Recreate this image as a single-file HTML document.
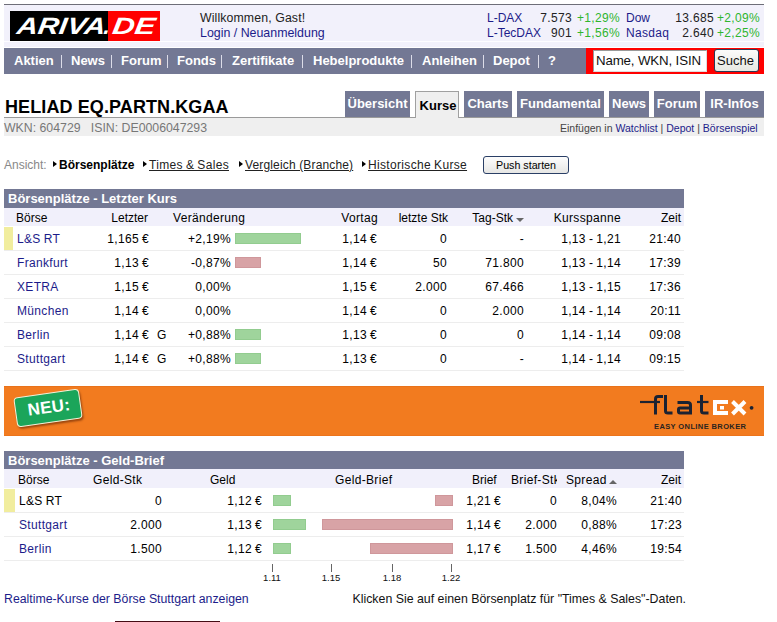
<!DOCTYPE html>
<html><head><meta charset="utf-8">
<style>
*{margin:0;padding:0;box-sizing:border-box}
html,body{width:777px;height:622px;overflow:hidden;background:#fff}
body{position:relative;font-family:"Liberation Sans",sans-serif;font-size:12px;color:#000}
.a{position:absolute;white-space:nowrap;line-height:15px}
.r{text-align:right}
.t{letter-spacing:0.33px;word-spacing:-0.6px}
.lnk{color:#1c1c8a}
.nav{color:#fff;font-weight:bold;font-size:13px}
.sp{position:absolute;top:55px;width:1px;height:13px;background:#dcdce8}
.tab{position:absolute;top:91px;height:26px;background:#737894;color:#fff;font-weight:bold;font-size:13px;line-height:26px;text-align:center}
.bar{position:absolute;height:11px}
.g{background:#9fd49c;box-shadow:inset 0 0 0 1px #92cc8f}
.rd{background:#d8a3a6;box-shadow:inset 0 0 0 1px #cf979b}
.sepl{position:absolute;left:4px;width:680px;height:1px;background:#ededed}
.tri{position:absolute;width:0;height:0;border-top:3px solid transparent;border-bottom:3px solid transparent;border-left:4px solid #000}
</style></head><body>
<div style="position:absolute;left:4px;top:4px;width:760px;height:1px;background:#6e6e78"></div>
<div style="position:absolute;left:4px;top:5px;width:760px;height:42px;background:#f2f1fb"></div>
<div style="position:absolute;left:4px;top:41px;width:760px;height:1px;background:#fdfdff"></div>
<div style="position:absolute;left:10px;top:11px;width:98px;height:30px;background:#000"></div>
<div style="position:absolute;left:108px;top:11px;width:52px;height:30px;background:#f00"></div>
<svg style="position:absolute;left:0;top:0" width="170" height="50">
<g transform="translate(4.78,0) skewX(-8)">
<text x="16" y="34.3" textLength="88.5" lengthAdjust="spacingAndGlyphs" font-family="Liberation Sans" font-weight="bold" font-style="italic" font-size="23.6" fill="#fff">ARIVA</text>
<text x="103" y="34.3" font-family="Liberation Sans" font-weight="bold" font-style="italic" font-size="23" fill="#fff">.</text>
<text x="111.5" y="34.3" textLength="43" lengthAdjust="spacingAndGlyphs" font-family="Liberation Sans" font-weight="bold" font-style="italic" font-size="23.6" fill="#fff">DE</text>
</g></svg>
<div class="a" style="left:200px;top:11px;font-size:12.3px;letter-spacing:0.12px;color:#222">Willkommen, Gast!</div>
<div class="a lnk" style="left:200px;top:26px;font-size:12.4px">Login / Neuanmeldung</div>
<div class="a lnk" style="left:487px;top:11px">L-DAX</div>
<div class="a lnk" style="left:487px;top:26px">L-TecDAX</div>
<div class="a r t" style="left:520px;width:52px;top:11px;color:#222">7.573</div>
<div class="a r t" style="left:520px;width:52px;top:26px;color:#222">901</div>
<div class="a t" style="left:577px;top:11px;color:#2fb52f">+1,29%</div>
<div class="a t" style="left:577px;top:26px;color:#2fb52f">+1,56%</div>
<div class="a lnk" style="left:626px;top:11px">Dow</div>
<div class="a lnk t" style="left:626px;top:26px">Nasdaq</div>
<div class="a r t" style="left:660px;width:54px;top:11px;color:#222">13.685</div>
<div class="a r t" style="left:660px;width:54px;top:26px;color:#222">2.640</div>
<div class="a t" style="left:717px;top:11px;color:#2fb52f">+2,09%</div>
<div class="a t" style="left:717px;top:26px;color:#2fb52f">+2,25%</div>
<div style="position:absolute;left:4px;top:48px;width:582px;height:26px;background:#737894"></div>
<div class="a nav" style="left:14px;top:53px">Aktien</div>
<div class="a nav" style="left:71px;top:53px">News</div>
<div class="a nav" style="left:121px;top:53px">Forum</div>
<div class="a nav" style="left:177px;top:53px">Fonds</div>
<div class="a nav" style="left:232px;top:53px">Zertifikate</div>
<div class="a nav" style="left:313px;top:53px">Hebelprodukte</div>
<div class="a nav" style="left:422px;top:53px">Anleihen</div>
<div class="a nav" style="left:493px;top:53px">Depot</div>
<div class="a nav" style="left:548px;top:53px">?</div>
<div class="sp" style="left:61px"></div>
<div class="sp" style="left:111px"></div>
<div class="sp" style="left:167px"></div>
<div class="sp" style="left:221px"></div>
<div class="sp" style="left:302px"></div>
<div class="sp" style="left:411px"></div>
<div class="sp" style="left:483px"></div>
<div class="sp" style="left:538px"></div>
<div style="position:absolute;left:586px;top:48px;width:178px;height:26px;background:#f00"></div>
<div style="position:absolute;left:593px;top:50px;width:114px;height:22px;background:#fff;border:1px solid #9a9a9a;border-right-color:#ddd;border-bottom-color:#ddd"></div>
<div class="a" style="left:596px;top:53px;font-size:13.3px;letter-spacing:-0.15px;color:#111">Name, WKN, ISIN</div>
<div style="position:absolute;left:714px;top:49px;width:45px;height:23px;background:linear-gradient(#fbfbfa,#e8e8e2);border:1px solid #2b3a55;border-radius:3px"></div>
<div class="a" style="left:717px;top:53px;font-size:13px;color:#111">Suche</div>
<div class="a" style="left:5px;top:97px;font-size:18px;line-height:20px;font-weight:bold;letter-spacing:0.1px">HELIAD EQ.PARTN.KGAA</div>
<div class="tab" style="left:345px;width:65px">Übersicht</div>
<div class="tab" style="left:415px;width:44px;top:91px;height:27px;line-height:28px;background:#efefef;color:#000;border:1px solid #a0a0a0;border-bottom:none;padding-left:2px">Kurse</div>
<div class="tab" style="left:464px;width:48px">Charts</div>
<div class="tab" style="left:517px;width:87px">Fundamental</div>
<div class="tab" style="left:609px;width:40px">News</div>
<div class="tab" style="left:654px;width:46px">Forum</div>
<div class="tab" style="left:705px;width:59px">IR-Infos</div>
<div style="position:absolute;left:4px;top:117px;width:411px;height:1px;background:#9a9a9a"></div>
<div style="position:absolute;left:459px;top:117px;width:305px;height:1px;background:#9a9a9a"></div>
<div style="position:absolute;left:4px;top:118px;width:760px;height:18px;background:#efefef"></div>
<div class="a" style="left:4px;top:121px;color:#777;font-size:12.3px">WKN: 604729&nbsp;&nbsp; ISIN: DE0006047293</div>
<div class="a" style="left:560px;top:121px;font-size:10.5px;color:#444">Einfügen in <span class="lnk">Watchlist</span> | <span class="lnk">Depot</span> | <span class="lnk">Börsenspiel</span></div>
<div class="a" style="left:4px;top:158px;color:#888">Ansicht:</div>
<div class="tri" style="left:53px;top:161px"></div>
<div class="tri" style="left:143px;top:161px"></div>
<div class="tri" style="left:239px;top:161px"></div>
<div class="tri" style="left:362px;top:161px"></div>
<div class="a" style="left:59px;top:158px;font-weight:bold">Börsenplätze</div>
<div class="a t" style="left:149px;top:158px;text-decoration:underline;color:#222">Times &amp; Sales</div>
<div class="a" style="left:245px;top:158px;text-decoration:underline;color:#222;letter-spacing:0.15px">Vergleich (Branche)</div>
<div class="a t" style="left:368px;top:158px;text-decoration:underline;color:#222">Historische Kurse</div>
<div style="position:absolute;left:483px;top:156px;width:86px;height:18px;background:linear-gradient(#fdfdfd,#e6e6e4);border:1px solid #2a3f66;border-radius:3px"></div>
<div class="a" style="left:496px;top:158px;font-size:10.7px">Push starten</div>
<div style="position:absolute;left:4px;top:189px;width:680px;height:19px;background:#737894"></div>
<div class="a" style="left:8px;top:191px;font-size:13px;font-weight:bold;color:#fff">Börsenplätze - Letzter Kurs</div>
<div style="position:absolute;left:4px;top:208px;width:680px;height:18px;background:#f1f0fb"></div>
<div class="a" style="left:16px;top:211px">Börse</div>
<div class="a r" style="left:80px;width:68px;top:211px">Letzter</div>
<div class="a t" style="left:173px;top:211px">Veränderung</div>
<div class="a r t" style="left:302px;width:76px;top:211px">Vortag</div>
<div class="a r" style="left:382px;width:66px;top:211px">letzte Stk</div>
<div class="a r" style="left:450px;width:63px;top:211px">Tag-Stk</div>
<div style="position:absolute;left:516px;top:218px;width:0;height:0;border-left:4px solid transparent;border-right:4px solid transparent;border-top:4px solid #666"></div>
<div class="a r t" style="left:531px;width:90px;top:211px">Kursspanne</div>
<div class="a r" style="left:631px;width:50px;top:211px">Zeit</div>
<div style="position:absolute;left:4px;top:227px;width:9px;height:23px;background:#f1ed9e"></div>
<div class="a lnk t" style="left:17px;top:232px">L&amp;S RT</div>
<div class="a r t" style="left:91px;width:58px;top:232px">1,165 €</div>
<div class="a r t" style="left:181px;width:50px;top:232px">+2,19%</div>
<div class="bar g" style="left:235px;top:233px;width:66px"></div>
<div class="a r t" style="left:317px;width:60px;top:232px">1,14 €</div>
<div class="a r t" style="left:387px;width:60px;top:232px">0</div>
<div class="a r t" style="left:464px;width:60px;top:232px">-</div>
<div class="a r t" style="left:541px;width:80px;top:232px">1,13 - 1,21</div>
<div class="a r t" style="left:621px;width:60px;top:232px">21:40</div>
<div class="sepl" style="top:250px"></div>
<div class="a lnk t" style="left:17px;top:256px">Frankfurt</div>
<div class="a r t" style="left:91px;width:58px;top:256px">1,13 €</div>
<div class="a r t" style="left:181px;width:50px;top:256px">-0,87%</div>
<div class="bar rd" style="left:235px;top:257px;width:26px"></div>
<div class="a r t" style="left:317px;width:60px;top:256px">1,14 €</div>
<div class="a r t" style="left:387px;width:60px;top:256px">50</div>
<div class="a r t" style="left:464px;width:60px;top:256px">71.800</div>
<div class="a r t" style="left:541px;width:80px;top:256px">1,13 - 1,14</div>
<div class="a r t" style="left:621px;width:60px;top:256px">17:39</div>
<div class="sepl" style="top:274px"></div>
<div class="a lnk t" style="left:17px;top:280px">XETRA</div>
<div class="a r t" style="left:91px;width:58px;top:280px">1,15 €</div>
<div class="a r t" style="left:181px;width:50px;top:280px">0,00%</div>
<div class="a r t" style="left:317px;width:60px;top:280px">1,15 €</div>
<div class="a r t" style="left:387px;width:60px;top:280px">2.000</div>
<div class="a r t" style="left:464px;width:60px;top:280px">67.466</div>
<div class="a r t" style="left:541px;width:80px;top:280px">1,13 - 1,15</div>
<div class="a r t" style="left:621px;width:60px;top:280px">17:36</div>
<div class="sepl" style="top:298px"></div>
<div class="a lnk t" style="left:17px;top:304px">München</div>
<div class="a r t" style="left:91px;width:58px;top:304px">1,14 €</div>
<div class="a r t" style="left:181px;width:50px;top:304px">0,00%</div>
<div class="a r t" style="left:317px;width:60px;top:304px">1,14 €</div>
<div class="a r t" style="left:387px;width:60px;top:304px">0</div>
<div class="a r t" style="left:464px;width:60px;top:304px">2.000</div>
<div class="a r t" style="left:541px;width:80px;top:304px">1,14 - 1,14</div>
<div class="a r t" style="left:621px;width:60px;top:304px">20:11</div>
<div class="sepl" style="top:322px"></div>
<div class="a lnk t" style="left:17px;top:328px">Berlin</div>
<div class="a r t" style="left:91px;width:58px;top:328px">1,14 €</div>
<div class="a" style="left:157px;top:328px">G</div>
<div class="a r t" style="left:181px;width:50px;top:328px">+0,88%</div>
<div class="bar g" style="left:235px;top:329px;width:26px"></div>
<div class="a r t" style="left:317px;width:60px;top:328px">1,13 €</div>
<div class="a r t" style="left:387px;width:60px;top:328px">0</div>
<div class="a r t" style="left:464px;width:60px;top:328px">0</div>
<div class="a r t" style="left:541px;width:80px;top:328px">1,14 - 1,14</div>
<div class="a r t" style="left:621px;width:60px;top:328px">09:08</div>
<div class="sepl" style="top:346px"></div>
<div class="a lnk t" style="left:17px;top:352px">Stuttgart</div>
<div class="a r t" style="left:91px;width:58px;top:352px">1,14 €</div>
<div class="a" style="left:157px;top:352px">G</div>
<div class="a r t" style="left:181px;width:50px;top:352px">+0,88%</div>
<div class="bar g" style="left:235px;top:353px;width:26px"></div>
<div class="a r t" style="left:317px;width:60px;top:352px">1,13 €</div>
<div class="a r t" style="left:387px;width:60px;top:352px">0</div>
<div class="a r t" style="left:464px;width:60px;top:352px">-</div>
<div class="a r t" style="left:541px;width:80px;top:352px">1,14 - 1,14</div>
<div class="a r t" style="left:621px;width:60px;top:352px">09:15</div>
<div class="sepl" style="top:370px"></div>
<div style="position:absolute;left:4px;top:386px;width:760px;height:50px;background:#f27b1f;border-top:1px solid #e9721a;border-bottom:1px solid #ec741b"></div>
<div style="position:absolute;left:15px;top:393px;width:66px;height:30px;background:#1ba55a;border:1px solid #f4f0d8;border-radius:4px;transform:rotate(-8deg);box-shadow:1px 2px 2px rgba(90,30,0,.55);color:#fff;font-weight:bold;font-size:17px;line-height:28px;text-align:center;letter-spacing:0.3px;padding-left:2px">NEU:</div>
<svg style="position:absolute;left:0;top:0" width="777" height="440">
<g fill="none" stroke="#1b2232" stroke-width="3">
<path d="M640 402 H660" stroke-width="2.2"/>
<path d="M655.5 414.5 V399 Q655.5 396.5 658 396.5 H663"/>
<path d="M665.5 395 V411 Q665.5 413 668 413 H672.5"/>
<path d="M677.5 402.5 H687.5 Q690.5 402.5 690.5 405 V413 H680 Q678.5 413 678.5 411.5 V409.5 Q678.5 408 680 408 H690"/>
<path d="M701.5 395 V411 Q701.5 413 704 413 H708.5"/>
<path d="M697 402 H708.5" stroke-width="2.2"/>
</g>
<path d="M713 400 H728 V404 H717 V411 H728 V415 H713 Z" fill="#fff"/>
<rect x="720" y="406" width="4" height="3.5" fill="#fff"/>
<path d="M732.5 401.5 L745 414 M745 401.5 L732.5 414" stroke="#fff" stroke-width="4"/>
<circle cx="751.6" cy="407.8" r="1.9" fill="#1b2232"/>
<text x="654" y="429" font-family="Liberation Sans" font-weight="bold" font-size="7.5" fill="#2a2420" textLength="92" lengthAdjust="spacing">EASY ONLINE BROKER</text>
</svg>
<div style="position:absolute;left:4px;top:451px;width:680px;height:18px;background:#737894"></div>
<div class="a" style="left:8px;top:453px;font-size:13px;font-weight:bold;color:#fff">Börsenplätze - Geld-Brief</div>
<div style="position:absolute;left:4px;top:469px;width:680px;height:19px;background:#f1f0fb"></div>
<div class="a" style="left:18px;top:473px">Börse</div>
<div class="a t" style="left:93px;top:473px">Geld-Stk</div>
<div class="a" style="left:210px;top:473px">Geld</div>
<div class="a t" style="left:335px;top:473px">Geld-Brief</div>
<div class="a" style="left:472px;top:473px">Brief</div>
<div class="a t" style="left:511px;top:473px;width:46px;overflow:hidden">Brief-Stk</div>
<div class="a t" style="left:566px;top:473px">Spread</div>
<div style="position:absolute;left:609px;top:480px;width:0;height:0;border-left:4px solid transparent;border-right:4px solid transparent;border-bottom:4px solid #666"></div>
<div class="a" style="left:661px;top:473px">Zeit</div>
<div style="position:absolute;left:4px;top:489px;width:11px;height:23px;background:#f1ed9e"></div>
<div class="a t" style="left:19px;top:494px">L&amp;S RT</div>
<div class="a r t" style="left:101px;width:61px;top:494px">0</div>
<div class="a r t" style="left:201px;width:61px;top:494px">1,12 €</div>
<div class="bar g" style="left:273px;top:495px;width:18px"></div>
<div class="bar rd" style="left:435px;top:495px;width:18px"></div>
<div class="a r t" style="left:441px;width:60px;top:494px">1,21 €</div>
<div class="a r t" style="left:497px;width:60px;top:494px">0</div>
<div class="a r t" style="left:557px;width:60px;top:494px">8,04%</div>
<div class="a r t" style="left:622px;width:60px;top:494px">21:40</div>
<div class="sepl" style="top:512px"></div>
<div class="a lnk t" style="left:19px;top:518px">Stuttgart</div>
<div class="a r t" style="left:101px;width:61px;top:518px">2.000</div>
<div class="a r t" style="left:201px;width:61px;top:518px">1,13 €</div>
<div class="bar g" style="left:273px;top:519px;width:33px"></div>
<div class="bar rd" style="left:322px;top:519px;width:131px"></div>
<div class="a r t" style="left:441px;width:60px;top:518px">1,14 €</div>
<div class="a r t" style="left:497px;width:60px;top:518px">2.000</div>
<div class="a r t" style="left:557px;width:60px;top:518px">0,88%</div>
<div class="a r t" style="left:622px;width:60px;top:518px">17:23</div>
<div class="sepl" style="top:536px"></div>
<div class="a lnk t" style="left:19px;top:542px">Berlin</div>
<div class="a r t" style="left:101px;width:61px;top:542px">1.500</div>
<div class="a r t" style="left:201px;width:61px;top:542px">1,12 €</div>
<div class="bar g" style="left:273px;top:543px;width:18px"></div>
<div class="bar rd" style="left:370px;top:543px;width:83px"></div>
<div class="a r t" style="left:441px;width:60px;top:542px">1,17 €</div>
<div class="a r t" style="left:497px;width:60px;top:542px">1.500</div>
<div class="a r t" style="left:557px;width:60px;top:542px">4,46%</div>
<div class="a r t" style="left:622px;width:60px;top:542px">19:54</div>
<div class="sepl" style="top:560px"></div>
<div style="position:absolute;left:272px;top:564px;width:1px;height:8px;background:#666"></div>
<div class="a" style="left:252px;width:40px;text-align:center;top:572px;font-size:9.5px;line-height:11px;color:#111">1.11</div>
<div style="position:absolute;left:331px;top:564px;width:1px;height:8px;background:#666"></div>
<div class="a" style="left:311px;width:40px;text-align:center;top:572px;font-size:9.5px;line-height:11px;color:#111">1.15</div>
<div style="position:absolute;left:392px;top:564px;width:1px;height:8px;background:#666"></div>
<div class="a" style="left:372px;width:40px;text-align:center;top:572px;font-size:9.5px;line-height:11px;color:#111">1.18</div>
<div style="position:absolute;left:451px;top:564px;width:1px;height:8px;background:#666"></div>
<div class="a" style="left:431px;width:40px;text-align:center;top:572px;font-size:9.5px;line-height:11px;color:#111">1.22</div>
<div class="a lnk" style="left:4px;top:592px;font-size:12.3px">Realtime-Kurse der Börse Stuttgart anzeigen</div>
<div class="a r" style="left:301px;width:385px;top:592px;font-size:12.35px;color:#111">Klicken Sie auf einen Börsenplatz für "Times &amp; Sales"-Daten.</div>
<div style="position:absolute;left:115px;top:621px;width:105px;height:1px;background:#440c14"></div>
</body></html>
